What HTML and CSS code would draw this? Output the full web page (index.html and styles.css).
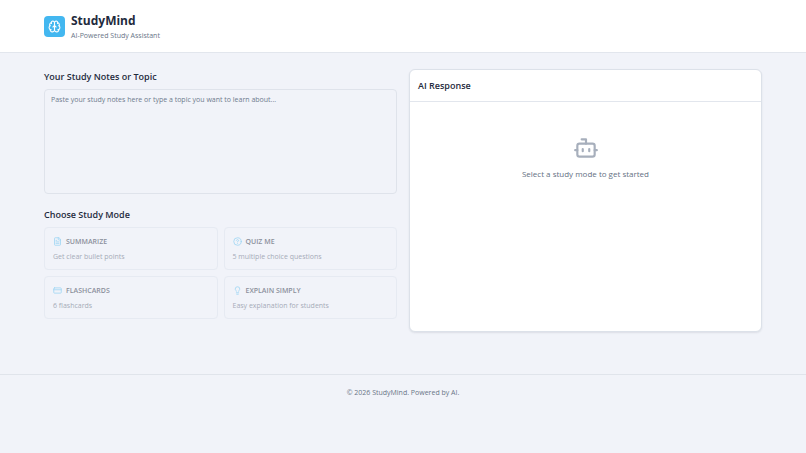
FILE: index.html
```
<!DOCTYPE html>
<html lang="en">
<head>
    <meta charset="UTF-8">
    <meta name="viewport" content="width=device-width, initial-scale=1.0">
    <title>StudyMind</title>
    <link rel="stylesheet" href="styles.css">
</head>
<body>
    <header class="header">
        <div class="container brand">
            <div class="logo">
                <svg class="icon" viewBox="0 0 24 24">
                    <path d="M12 5a3 3 0 1 0-5.997.125 4 4 0 0 0-2.526 5.77 4 4 0 0 0 .556 6.588A4 4 0 1 0 12 18Z"/>
                    <path d="M12 5a3 3 0 1 1 5.997.125 4 4 0 0 1 2.526 5.77 4 4 0 0 1-.556 6.588A4 4 0 1 1 12 18Z"/>
                    <path d="M15 13a4.5 4.5 0 0 1-3-4 4.5 4.5 0 0 1-3 4"/>
                    <path d="M17.599 6.5a3 3 0 0 0 .399-1.375M6.003 5.125A3 3 0 0 0 6.401 6.5M3.477 10.896a4 4 0 0 1 .585-.396M19.938 10.5a4 4 0 0 1 .585.396M6 18a4 4 0 0 1-1.967-.516M19.967 17.484A4 4 0 0 1 18 18"/>
                </svg>
            </div>
            <div>
                <h1>StudyMind</h1>
                <p class="tagline">AI-Powered Study Assistant</p>
            </div>
        </div>
    </header>

    <main class="container main">
        <section class="input-side">
            <label class="title" for="notes">Your Study Notes or Topic</label>
            <textarea id="notes" class="notes" placeholder="Paste your study notes here or type a topic you want to learn about..."></textarea>

            <h2 class="title">Choose Study Mode</h2>
            <div class="modes">
                <button class="mode" type="button" disabled>
                    <span class="mode-name">
                        <svg class="icon" viewBox="0 0 24 24">
                            <path d="M15 2H6a2 2 0 0 0-2 2v16a2 2 0 0 0 2 2h12a2 2 0 0 0 2-2V7Z"/>
                            <path d="M14 2v4a2 2 0 0 0 2 2h4M10 9H8M16 13H8M16 17H8"/>
                        </svg>
                        SUMMARIZE
                    </span>
                    <span class="mode-text">Get clear bullet points</span>
                </button>
                <button class="mode" type="button" disabled>
                    <span class="mode-name">
                        <svg class="icon" viewBox="0 0 24 24">
                            <circle cx="12" cy="12" r="10"/>
                            <path d="M9.09 9a3 3 0 0 1 5.83 1c0 2-3 3-3 3M12 17h.01"/>
                        </svg>
                        QUIZ ME
                    </span>
                    <span class="mode-text">5 multiple choice questions</span>
                </button>
                <button class="mode" type="button" disabled>
                    <span class="mode-name">
                        <svg class="icon" viewBox="0 0 24 24">
                            <rect x="2" y="5" width="20" height="14" rx="2"/>
                            <path d="M2 10h20"/>
                        </svg>
                        FLASHCARDS
                    </span>
                    <span class="mode-text">6 flashcards</span>
                </button>
                <button class="mode" type="button" disabled>
                    <span class="mode-name">
                        <svg class="icon" viewBox="0 0 24 24">
                            <path d="M15 14c.2-1 .7-1.7 1.5-2.5 1-.9 1.5-2.2 1.5-3.5A6 6 0 0 0 6 8c0 1 .2 2.2 1.5 3.5.7.7 1.3 1.5 1.5 2.5M9 18h6M10 22h4"/>
                        </svg>
                        EXPLAIN SIMPLY
                    </span>
                    <span class="mode-text">Easy explanation for students</span>
                </button>
            </div>
        </section>

        <section class="response">
            <h2 class="response-title">AI Response</h2>
            <div class="empty">
                <svg class="icon" viewBox="0 0 24 24">
                    <path d="M12 8V4H8"/>
                    <rect x="4" y="8" width="16" height="12" rx="2"/>
                    <path d="M2 14h2M20 14h2M15 13v2M9 13v2"/>
                </svg>
                <p>Select a study mode to get started</p>
            </div>
        </section>
    </main>

    <footer class="footer">
        <p>© 2026 StudyMind. Powered by AI.</p>
    </footer>
</body>
</html>
```
FILE: styles.css
```
* {
    box-sizing: border-box;
    margin: 0;
    padding: 0;
}

body {
    min-height: 100vh;
    background: #f1f3f9;
    color: #1f2b3d;
    font-family: "Open Sans", "Noto Sans", sans-serif;
    font-size: 7px;
    line-height: 10px;
}

button,
textarea {
    font: inherit;
}

.icon {
    fill: none;
    stroke: currentColor;
    stroke-width: 2;
    stroke-linecap: round;
    stroke-linejoin: round;
    flex-shrink: 0;
}

.container {
    max-width: 742px;
    margin: 0 auto;
    padding: 0 12px;
}

/* Header */
.header {
    padding: 11px 0;
    background: #fff;
    border-bottom: 1px solid #e2e6ed;
}

.brand {
    display: flex;
    align-items: center;
    gap: 6px;
}

.logo {
    display: flex;
    padding: 4px;
    border-radius: 4px;
    background: #43b7f0;
    color: #fff;
}

.logo .icon {
    width: 13px;
    height: 13px;
}

h1 {
    font-size: 12px;
    line-height: 20px;
}

.tagline {
    color: #697587;
}

/* Main */
.main {
    display: grid;
    grid-template-columns: 1fr 1fr;
    gap: 12px;
    padding-top: 16px;
    padding-bottom: 42px;
}

.title {
    display: block;
    margin-bottom: 5px;
    font-size: 9px;
    font-weight: 600;
    line-height: 15px;
}

.notes {
    display: block;
    width: 100%;
    height: 105px;
    margin-bottom: 13px;
    padding: 5px 6px;
    border: 1px solid #dfe3eb;
    border-radius: 4px;
    background: transparent;
    color: inherit;
    resize: none;
}

.notes::placeholder {
    color: #6f7b8e;
}

.modes {
    display: grid;
    grid-template-columns: 1fr 1fr;
    gap: 6px;
}

.mode {
    padding: 8px 8px 6px;
    border: 1px solid #dce2ec;
    border-radius: 4px;
    background: transparent;
    color: #1f2b3d;
    text-align: left;
}

.mode:disabled {
    opacity: 0.5;
}

.mode-name {
    display: flex;
    align-items: center;
    gap: 4px;
    margin-bottom: 4px;
    font-weight: 600;
    line-height: 11px;
}

.mode-name .icon {
    width: 9px;
    height: 9px;
    color: #43b7f0;
}

.mode-text {
    display: block;
    color: #566276;
    font-weight: 500;
    line-height: 12px;
}

.response {
    min-height: 263px;
    border: 1px solid #dce1e9;
    border-radius: 6px;
    background: #fff;
    box-shadow: 0 1px 2px rgba(30, 41, 59, 0.1);
}

.response-title {
    padding: 8px;
    border-bottom: 1px solid #e2e6ed;
    font-size: 9px;
    font-weight: 600;
    line-height: 15px;
}

.empty {
    display: flex;
    flex-direction: column;
    align-items: center;
    gap: 7px;
    padding-top: 33px;
    color: #647083;
    font-size: 8px;
    line-height: 12px;
}

.empty .icon {
    width: 26px;
    height: 26px;
    color: #a7afbc;
}

/* Footer */
.footer {
    padding: 13px;
    border-top: 1px solid #e0e4eb;
    color: #697587;
    text-align: center;
}
```
